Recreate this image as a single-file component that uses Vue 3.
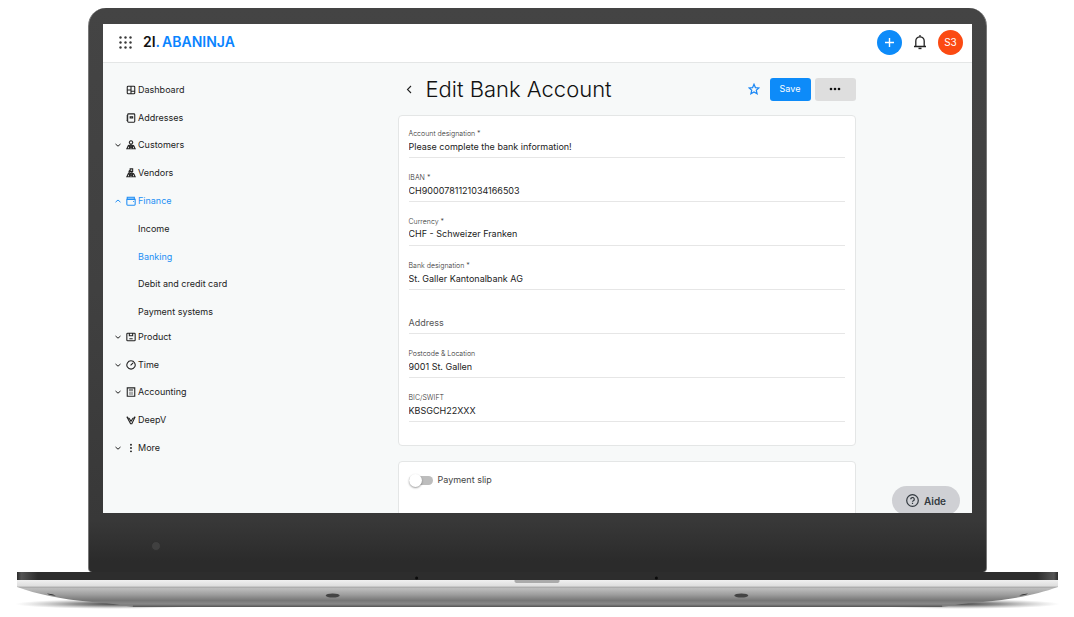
<script setup>
import { ref } from 'vue'

const primaryNav = [
  { label: 'Dashboard', icon: 'dashboard' },
  { label: 'Addresses', icon: 'addresses' },
  { label: 'Customers', icon: 'customers', toggle: 'closed' },
  { label: 'Vendors', icon: 'vendors' },
  { label: 'Finance', icon: 'finance', toggle: 'open', active: true }
]
const financeNav = [
  { label: 'Income' },
  { label: 'Banking', active: true },
  { label: 'Debit and credit card' },
  { label: 'Payment systems' }
]
const secondaryNav = [
  { label: 'Product', icon: 'product', toggle: 'closed' },
  { label: 'Time', icon: 'time', toggle: 'closed' },
  { label: 'Accounting', icon: 'accounting', toggle: 'closed' },
  { label: 'DeepV', icon: 'deepv' },
  { label: 'More', icon: 'more', toggle: 'closed' }
]
const navGroups = [
  { name: 'primary', items: primaryNav },
  { name: 'finance', items: financeNav },
  { name: 'secondary', items: secondaryNav }
]

const icons = {
  dashboard: 'M5 3h14q2 0 2 2v14q0 2-2 2H5q-2 0-2-2V5q0-2 2-2zM12 3v18M3 12h9M12 15h9',
  addresses: 'M6 2h13q2 0 2 2v16q0 2-2 2H6q-2 0-2-2V4q0-2 2-2zM1 7h4M1 12h4M1 17h4M10 9h6v3h-6z',
  customers: 'M12 2a4 4 0 1 0 .1 0M12 10v5M5 15q0-3 7-3t7 3M5 15l-3 6h8l-3-6M17 15l-3 6h8l-3-6M8 14l4 4 4-4',
  vendors: 'M10 2h6v6h-6zM9 6a4 4 0 1 0 6 4M5 15q0-3 7-3t7 3M5 15l-3 6h8l-3-6M17 15l-3 6h8l-3-6M8 14l4 4 4-4',
  finance: 'M3 7V3h17v4M2 8h20v12q0 2-2 2H4q-2 0-2-2zM17 13h2',
  product: 'M4 3h16q2 0 2 2v14q0 2-2 2H4q-2 0-2-2V5q0-2 2-2zM8 3v6h8V3M8 16h8',
  time: 'M12 2a10 10 0 1 0 .1 0M11 13l6-6',
  accounting: 'M3 2h18v20H3zM7 7h10',
  deepv: 'M2 4l9 17h3l8-17M7 7l5 8 5-8M2 4l4 4M22 4l-4 4',
  more: ''
}

const fields = ref([
  { id: 'designation', label: 'Account designation *', value: 'Please complete the bank information!' },
  { id: 'iban', label: 'IBAN *', value: 'CH9000781121034166503' },
  { id: 'currency', label: 'Currency *', value: 'CHF - Schweizer Franken', options: ['CHF - Schweizer Franken'] },
  { id: 'bank', label: 'Bank designation *', value: 'St. Galler Kantonalbank AG' },
  { id: 'address', label: 'Address', value: '' },
  { id: 'location', label: 'Postcode & Location', value: '9001 St. Gallen' },
  { id: 'bic', label: 'BIC/SWIFT', value: 'KBSGCH22XXX' }
])
const paymentSlip = ref(false)
</script>

<template>
  <div class="stage">
    <div class="lid">
      <div class="screen">
        <header class="topbar">
          <button class="plain apps" aria-label="Apps">
            <svg width="13" height="13" viewBox="0 0 13 13" fill="#3a3a3a">
              <template v-for="y in 3" :key="y">
                <circle v-for="x in 3" :key="x" :cx="x * 5 - 3.5" :cy="y * 5 - 3.5" r="1.2" />
              </template>
            </svg>
          </button>
          <a class="logo" href="#"><span class="logo-mark">2I</span>.<span class="logo-name">ABANINJA</span></a>
          <button class="round add" aria-label="Add">
            <svg width="11" height="11" viewBox="0 0 11 11"><path d="M5.500 1v9M1 5.500h9" stroke="#fff" stroke-width="1.400" /></svg>
          </button>
          <button class="plain bell" aria-label="Notifications">
            <svg width="14" height="16" viewBox="0 0 14 16" fill="none" stroke="#222" stroke-width="1.300">
              <path d="M1 12.500h12M2.800 12.500V7a4.200 4.200 0 0 1 8.400 0v5.500M7 2.800V1" />
              <path d="M5.500 14.400h3" stroke-width="1.500" />
            </svg>
          </button>
          <button class="round user">S3</button>
        </header>

        <div class="body">
          <nav class="sidebar" aria-label="Main">
            <ul v-for="group in navGroups" :key="group.name" :class="['group', group.name]">
              <li v-for="item in group.items" :key="item.label">
                <a href="#" :class="{ active: item.active }">
                  <span v-if="group.name !== 'finance'" class="chevron">
                    <svg v-if="item.toggle" width="6" height="6" viewBox="0 0 6 6" fill="none" stroke="currentColor">
                      <path :d="item.toggle === 'open' ? 'M.5 4.200L3 2l2.500 2.200' : 'M.5 2L3 4.200 5.500 2'" />
                    </svg>
                  </span>
                  <svg v-if="item.icon" class="icon" viewBox="0 0 24 24" fill="none" stroke="currentColor" stroke-width="2.600">
                    <path :d="icons[item.icon]" />
                    <path v-if="item.icon === 'accounting'" d="M7 11h10v8H7z" fill="currentColor" fill-opacity=".35" stroke="none" />
                    <path v-if="item.icon === 'finance'" d="M3 3h17v5H3z" fill="currentColor" fill-opacity=".4" stroke="none" />
                    <g v-if="item.icon === 'more'" fill="currentColor" stroke="none">
                      <circle cx="12" cy="4" r="2.300" /><circle cx="12" cy="12" r="2.300" /><circle cx="12" cy="20" r="2.300" />
                    </g>
                  </svg>
                  <span>{{ item.label }}</span>
                </a>
              </li>
            </ul>
          </nav>

          <main class="content">
            <div class="heading">
              <button class="plain back" aria-label="Back">
                <svg width="6" height="9" viewBox="0 0 6 9" fill="none" stroke="#222" stroke-width="1.100"><path d="M5 1L1.500 4.500 5 8" /></svg>
              </button>
              <h1>Edit Bank Account</h1>
              <button class="plain star" aria-label="Favourite">
                <svg width="12" height="12" viewBox="0 0 24 24" fill="none" stroke="#1a87f5" stroke-width="2.400">
                  <path d="M12 2.500l2.800 6.700 7.200.6-5.500 4.700 1.700 7L12 17.800 5.800 21.500l1.700-7L2 9.800l7.200-.6z" />
                </svg>
              </button>
              <button class="action save">Save</button>
              <button class="action options" aria-label="More options">
                <svg width="12" height="4" viewBox="0 0 12 4" fill="#111"><circle cx="2" cy="2" r="1.300" /><circle cx="6" cy="2" r="1.300" /><circle cx="10" cy="2" r="1.300" /></svg>
              </button>
            </div>

            <form class="card fields" @submit.prevent>
              <div v-for="field in fields" :key="field.id" :class="['field', { empty: !field.value }]">
                <label :for="field.id">{{ field.label }}</label>
                <select v-if="field.options" :id="field.id" v-model="field.value">
                  <option v-for="option in field.options" :key="option">{{ option }}</option>
                </select>
                <input v-else :id="field.id" v-model="field.value" type="text">
              </div>
            </form>

            <section class="card slip">
              <label class="switch">
                <input v-model="paymentSlip" type="checkbox" role="switch">
                <span>Payment slip</span>
              </label>
            </section>
          </main>
        </div>

        <button class="help">
          <svg width="13" height="13" viewBox="0 0 13 13" fill="none" stroke="#333a40" stroke-width="1.200">
            <circle cx="6.500" cy="6.500" r="5.800" />
            <path d="M4.700 5.300a1.800 1.700 0 1 1 2.700 1.400c-.6.400-.9.600-.9 1.100M6.500 8.800v1.100" />
          </svg>
          <span>Aide</span>
        </button>
      </div>
      <div class="chin"><span class="sensor"></span></div>
    </div>

    <svg class="base" viewBox="0 0 1042 46" preserveAspectRatio="none" aria-hidden="true">
      <defs>
        <linearGradient id="metal" x1="0" y1="0" x2="0" y2="1">
          <stop offset="0" stop-color="#f0f0f0" />
          <stop offset=".25" stop-color="#dedede" />
          <stop offset=".3" stop-color="#a9a9a9" />
          <stop offset=".36" stop-color="#bdbdbd" />
          <stop offset=".6" stop-color="#9f9f9f" />
          <stop offset=".85" stop-color="#777" />
          <stop offset="1" stop-color="#888" />
        </linearGradient>
        <linearGradient id="deck" x1="0" y1="0" x2="1" y2="0">
          <stop offset="0" stop-color="#2b2b2b" />
          <stop offset=".004" stop-color="#555" />
          <stop offset=".02" stop-color="#2d2d2d" />
          <stop offset=".98" stop-color="#2d2d2d" />
          <stop offset=".996" stop-color="#555" />
          <stop offset="1" stop-color="#2b2b2b" />
        </linearGradient>
        <radialGradient id="shade">
          <stop offset="0" stop-color="#444" />
          <stop offset=".4" stop-color="#777" stop-opacity=".8" />
          <stop offset="1" stop-color="#aaa" stop-opacity="0" />
        </radialGradient>
      </defs>
      <ellipse cx="98" cy="33" rx="100" ry="5" fill="url(#shade)" />
      <ellipse cx="944" cy="33" rx="100" ry="5" fill="url(#shade)" />
      <path d="M70 29h902l-46 7H116z" fill="#808080" />
      <path d="M116 34.500h810v1.500H116z" fill="#5c5c5c" />
      <path d="M0 9h1042v7c-20 7-42 12-75 15q-20 2-45 2H120q-25 0-45-2C42 28 20 23 0 16z" fill="url(#metal)" />
      <path d="M0 1h1042v8H0z" fill="url(#deck)" />
      <path d="M498 9h45v1q0 2-3 2h-39q-3 0-3-2z" fill="#aaa" />
      <ellipse cx="316" cy="24.500" rx="7" ry="2" fill="#444" />
      <ellipse cx="725" cy="24.500" rx="7" ry="2" fill="#444" />
      <path d="M30 22.500q6 .5 9 2-6 0-9-2zM1012 22.500q-6 .5-9 2 6 0 9-2z" fill="#333" />
      <circle cx="400" cy="7" r="1.500" fill="#0b0b0b" />
      <circle cx="640" cy="7" r="1.500" fill="#0b0b0b" />
    </svg>
  </div>
</template>

<style>
body {
  background: #fff;
}
</style>

<style scoped>
* {
  box-sizing: border-box;
}
.stage {
  display: flex;
  flex-direction: column;
  height: 100vh;
  padding: 8px 16px 0 17px;
  font: 9px/12px Inter, "Liberation Sans", sans-serif;
  color: #222;
}
.lid {
  flex: 1;
  min-height: 0;
  display: flex;
  flex-direction: column;
  margin: 0 71px;
  padding: 16px 14px 0;
  border: solid #777;
  border-width: 0 1px;
  border-radius: 18px 18px 4px 4px;
  background: linear-gradient(#444, #404040 50%, #383838 91%, #2b2b2b 98%);
}
.screen {
  position: relative;
  flex: 1;
  min-height: 0;
  overflow: hidden;
  display: flex;
  flex-direction: column;
  background: #f7f9f9;
}
.chin {
  flex: none;
  height: 59px;
  padding: 28px 48px;
}
.sensor {
  display: block;
  width: 10px;
  height: 10px;
  border: 1px solid #303030;
  border-radius: 50%;
  background: #404040;
}
.base {
  flex: none;
  width: 100%;
  height: 46px;
  margin-top: -1px;
  overflow: visible;
}
button {
  display: flex;
  align-items: center;
  justify-content: center;
  padding: 0;
  border: 0;
  font: inherit;
  cursor: pointer;
}
.plain {
  background: none;
}
.topbar {
  flex: none;
  display: flex;
  align-items: center;
  height: 39px;
  padding: 0 9px 2px 16px;
  border-bottom: 1px solid #e4e6e6;
  background: #fff;
}
.logo {
  margin: 0 auto 0 11px;
  font-size: 14px;
  line-height: 18px;
  font-weight: 600;
  color: #0a84ff;
  text-decoration: none;
}
.logo-mark {
  color: #111;
}
.logo-name {
  margin-left: 2px;
}
.round {
  width: 25px;
  height: 25px;
  border-radius: 50%;
  color: #fff;
}
.add {
  background: #0d8bf9;
}
.bell {
  margin: 0 11px;
}
.user {
  background: #fb4a12;
  font-size: 10px;
}
.body {
  flex: 1;
  display: flex;
  min-height: 0;
}
.sidebar {
  flex: none;
  width: 178px;
  padding: 13px 0 0 12px;
}
.group {
  display: grid;
  grid-auto-rows: 1fr;
  height: 139px;
  margin: 0;
  padding: 0;
  list-style: none;
}
.finance {
  height: 111px;
  margin-bottom: -3px;
  padding-left: 23px;
}
.group a {
  display: flex;
  align-items: center;
  height: 100%;
  color: #222;
  text-decoration: none;
}
.group a.active {
  color: #2490f5;
}
.chevron {
  display: flex;
  width: 6px;
  margin-right: 5px;
}
.icon {
  width: 10px;
  height: 10px;
  margin-right: 2px;
}
.content {
  flex: 1;
  width: 100%;
  max-width: 458px;
  margin: 0 auto;
  padding-top: 12px;
}
.heading {
  display: flex;
  align-items: center;
  height: 28px;
  margin-bottom: 12px;
}
.back {
  width: 12px;
  height: 20px;
  margin: 0 11px 0 5px;
}
h1 {
  margin: 0 auto 0 0;
  font-size: 22px;
  line-height: 28px;
  font-weight: 300;
  color: #111;
}
.star {
  margin-right: 10px;
}
.action {
  width: 41px;
  height: 23px;
  border-radius: 3px;
}
.save {
  margin-right: 4px;
  background: #0d8bf9;
  color: #fff;
}
.options {
  background: #dedede;
}
.card {
  border: 1px solid #e4e6e6;
  border-radius: 4px;
  background: #fff;
}
.fields {
  display: grid;
  gap: 15px;
  padding: 13px 10px 23px;
}
.field {
  display: flex;
  flex-direction: column;
  height: 29px;
  border-bottom: 1px solid #e6e6e6;
}
.field label {
  font-size: 7px;
  line-height: 10px;
  font-weight: 300;
  color: #333;
}
.field input,
.field select {
  appearance: none;
  width: 100%;
  height: 14px;
  padding: 0;
  border: 0;
  outline: 0;
  background: none;
  font: inherit;
  color: #222;
}
.empty {
  position: relative;
}
.empty label {
  position: absolute;
  left: 0;
  bottom: 4px;
  font-size: 9px;
  line-height: 12px;
  font-weight: 400;
  color: #555;
}
.empty input {
  margin-top: 10px;
}
.slip {
  height: 80px;
  margin-top: 15px;
  padding: 10px;
}
.switch {
  display: inline-flex;
  align-items: center;
  gap: 5px;
  height: 16px;
  color: #444;
}
.switch input {
  appearance: none;
  display: flex;
  align-items: center;
  width: 24px;
  height: 9px;
  margin: 0;
  border-radius: 5px;
  background: #bdbdbd;
}
.switch input::before {
  content: "";
  width: 13px;
  height: 13px;
  border-radius: 50%;
  background: #fff;
  box-shadow: 0 1px 2px rgba(0, 0, 0, 0.4);
}
.switch input:checked::before {
  margin-left: auto;
}
.help {
  position: absolute;
  right: 12px;
  bottom: -2px;
  gap: 5px;
  width: 68px;
  height: 29px;
  border-radius: 15px;
  background: #cfd0d4;
  color: #333a40;
  font-size: 10px;
  font-weight: 600;
}
</style>
